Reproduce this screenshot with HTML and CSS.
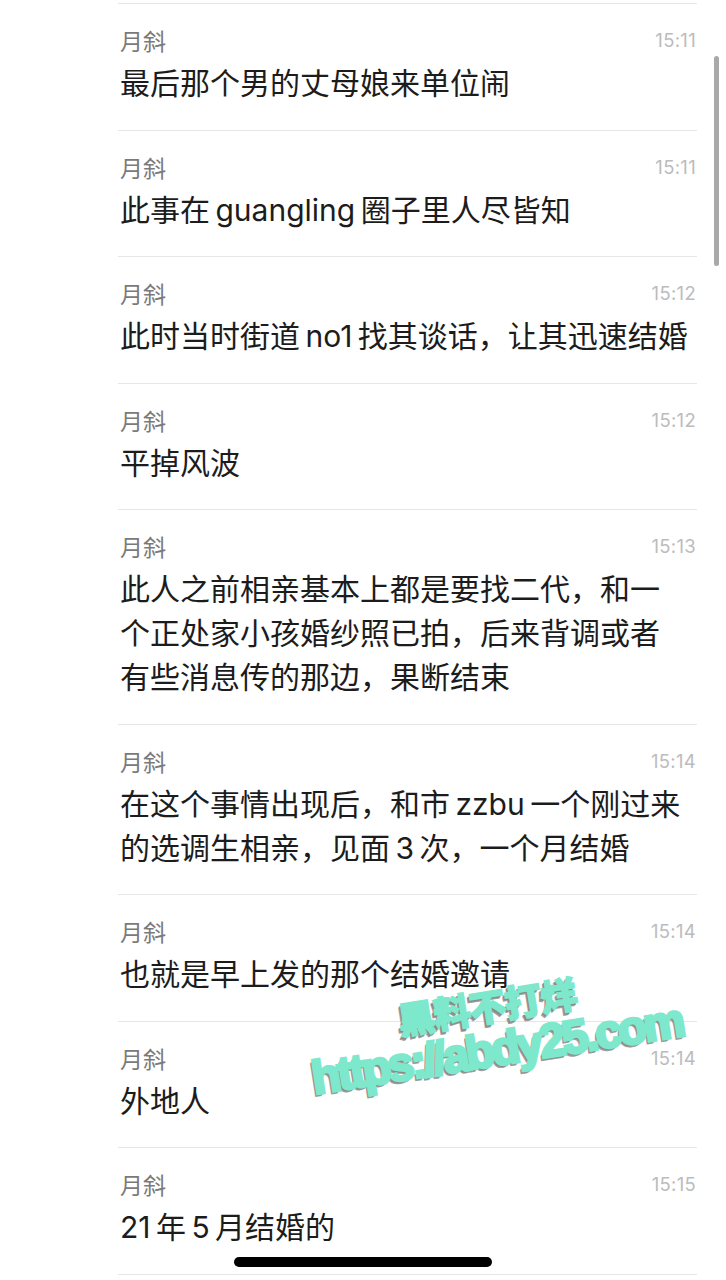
FILE: index.html
```html
<!DOCTYPE html>
<html lang="zh-CN">
<head>
<meta charset="utf-8">
<link rel="stylesheet" href="styles.css">
</head>
<body>
<div class="screen">
  <ul class="list">
    <li class="item"><div class="meta"><span class="name">月斜</span><span class="time">15:11</span></div><p class="msg">最后那个男的丈母娘来单位闹</p></li>
    <li class="item"><div class="meta"><span class="name">月斜</span><span class="time">15:11</span></div><p class="msg">此事在&#8201;guangling&#8201;圈子里人尽皆知</p></li>
    <li class="item"><div class="meta"><span class="name">月斜</span><span class="time">15:12</span></div><p class="msg">此时当时街道&#8201;no1&#8201;找其谈话，让其迅速结婚</p></li>
    <li class="item"><div class="meta"><span class="name">月斜</span><span class="time">15:12</span></div><p class="msg">平掉风波</p></li>
    <li class="item"><div class="meta"><span class="name">月斜</span><span class="time">15:13</span></div><p class="msg">此人之前相亲基本上都是要找二代，和一<br>个正处家小孩婚纱照已拍，后来背调或者<br>有些消息传的那边，果断结束</p></li>
    <li class="item"><div class="meta"><span class="name">月斜</span><span class="time">15:14</span></div><p class="msg">在这个事情出现后，和市&#8201;zzbu&#8201;一个刚过来<br>的选调生相亲，见面&#8201;3&#8201;次，一个月结婚</p></li>
    <li class="item"><div class="meta"><span class="name">月斜</span><span class="time">15:14</span></div><p class="msg">也就是早上发的那个结婚邀请</p></li>
    <li class="item"><div class="meta"><span class="name">月斜</span><span class="time">15:14</span></div><p class="msg">外地人</p></li>
    <li class="item"><div class="meta"><span class="name">月斜</span><span class="time">15:15</span></div><p class="msg">21&#8201;年&#8201;5&#8201;月结婚的</p></li>
    <li class="item"></li>
  </ul>
  <div class="scrollbar"></div>
  <div class="watermark">
    <div class="wm-cn">黑料不打烊</div>
    <div class="wm-url">https://abdy25.com</div>
  </div>
  <div class="home-indicator"></div>
</div>
</body>
</html>
```
FILE: styles.css
```css
* { box-sizing: border-box; }
html, body { margin: 0; padding: 0; background: #fff; }
body {
  font-family: Inter, "Noto Sans CJK SC", sans-serif;
  color: #1a1a1a;
}
.screen {
  position: relative;
  width: 726px;
  height: 1280px;
  overflow: hidden;
  background: #fff;
}
.list {
  list-style: none;
  margin: 0;
  padding: 3px 0 0 0;
}
.item {
  margin: 0 29px 0 118px;
  border-top: 1px solid #e6e6e6;
  padding: 20px 0 24.5px 2px;
}
.meta {
  display: flex;
  justify-content: space-between;
  align-items: center;
  height: 32px;
}
.name {
  font-family: "Noto Sans CJK SC", sans-serif;
  font-size: 23px;
  color: #7a7a7a;
}
.time {
  font-family: Inter, sans-serif;
  font-size: 18.5px;
  color: #bcbcbc;
  margin-right: 1px;
  letter-spacing: 0.3px;
}
.msg {
  margin: 5px 0 0 0;
  font-size: 30px;
  line-height: 44px;
  color: #1c1c1c;
  white-space: nowrap;
}
.scrollbar {
  position: absolute;
  left: 714px;
  top: 56px;
  width: 5px;
  height: 210px;
  border-radius: 3px;
  background: #a9a9a9;
}
.home-indicator {
  position: absolute;
  left: 234px;
  top: 1257px;
  width: 258px;
  height: 10px;
  border-radius: 5px;
  background: #000;
}
.watermark {
  position: absolute;
  left: 290px;
  top: 1016px;
  width: 420px;
  transform: rotate(-9deg);
  transform-origin: left top;
  display: flex;
  flex-direction: column;
  align-items: flex-start;
  color: #7de8cb;
  text-shadow: -2px 2px 0 #8a8a8a, -3px 3px 0 #a0a0a0;
}
.wm-cn {
  font-family: "Noto Sans CJK SC", sans-serif;
  font-weight: 900;
  font-size: 37px;
  line-height: 40px;
  margin-left: 106px;
  letter-spacing: -1px;
  -webkit-text-stroke: 1.5px #7de8cb;
}
.wm-url {
  font-family: "Liberation Sans", Arial, sans-serif;
  font-weight: 700;
  font-size: 47px;
  line-height: 50px;
  letter-spacing: -3px;
  margin-left: 12px;
  -webkit-text-stroke: 3px #7de8cb;
}
```
